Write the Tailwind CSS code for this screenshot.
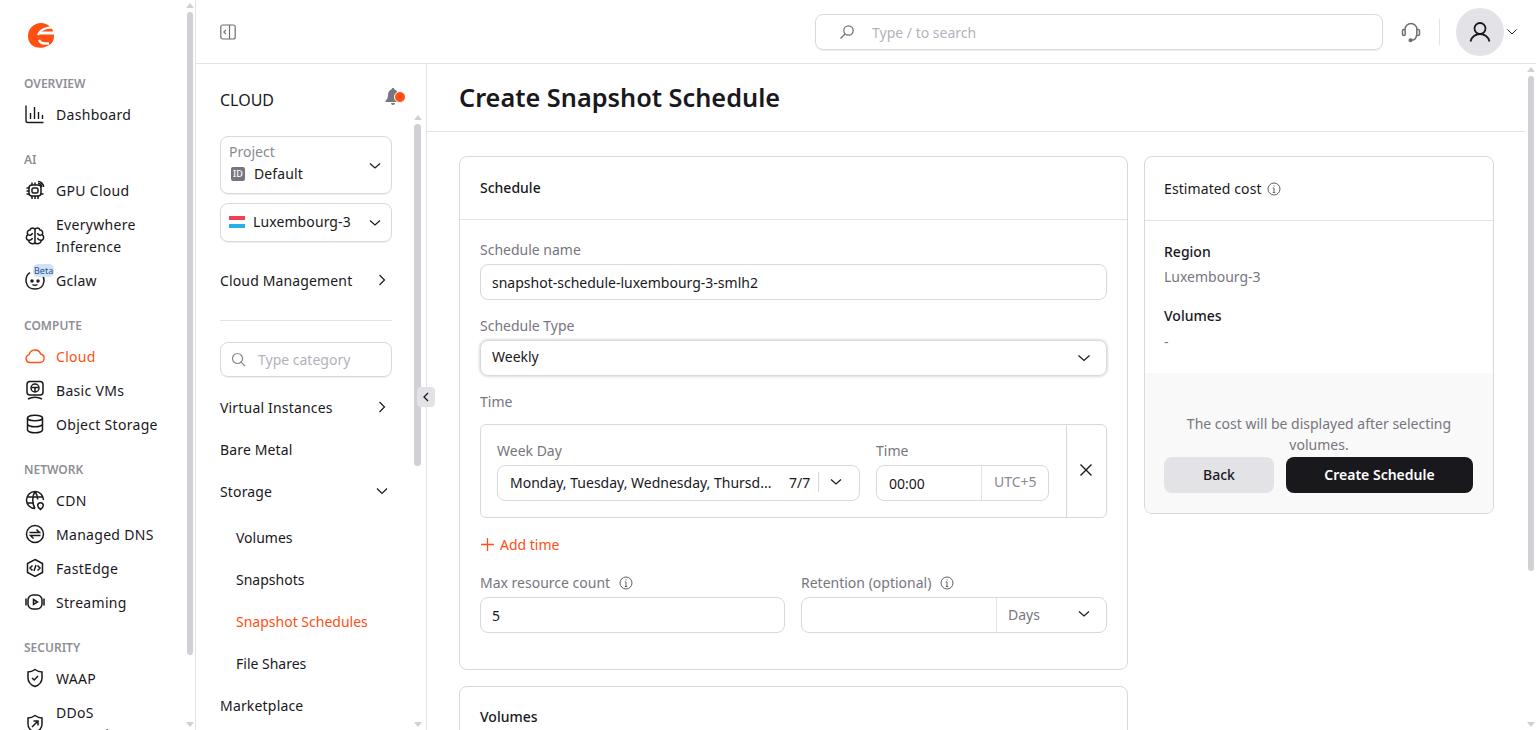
<!DOCTYPE html>
<html lang="en">
<head>
<meta charset="UTF-8">
<title>Create Snapshot Schedule</title>
<script src="https://cdn.jsdelivr.net/npm/@tailwindcss/browser@4"></script>
</head>
<body class="font-['Noto_Sans',sans-serif] text-[14px] text-[#19181c] bg-white">
<div class="flex h-[730px] w-[1536px] overflow-hidden">

  <!-- main nav -->
  <aside class="relative w-[196px] shrink-0 h-full overflow-hidden border-r border-[#e3e2e6] pl-[24px] tracking-[0.3px]">
    <div class="h-[74px] pt-[21px] pl-[3px]">
      <svg width="30" height="30" viewBox="0 0 30 30" fill="none"><circle cx="14" cy="15" r="13" fill="#ff4f12"/><path stroke="#fff" stroke-width="2.200" d="M31 7C23 5.500 14 7 11 14"/><path stroke="#fff" stroke-width="3" d="M12 12H29"/><path stroke="#fff" stroke-width="2.400" d="M12 19C13 21.500 15 22.500 18 22.500H22"/><path stroke="#fff" stroke-width="1.600" d="M4 24.500C10 29.500 20 28.500 27 21"/></svg>
    </div>
    <div class="h-[20px] text-[12px] leading-[20px] font-semibold tracking-normal text-[#8f8e96]">OVERVIEW</div>
    <ul class="mt-[4px]">
      <li class="h-[34px] pb-[2px] flex items-center gap-[10px]">
        <svg class="w-[22px] h-[22px] shrink-0" viewBox="0 0 22 22" fill="none" stroke="#19181c" stroke-width="1.400"><path d="M2 2.500V17.500a2 2 0 0 0 2 2H19.500M6.500 16V10M10.500 16V4M14.500 16V9M18.500 16V12"/></svg>
        <span>Dashboard</span>
      </li>
    </ul>
    <div class="mt-[18px] h-[20px] text-[12px] leading-[20px] font-semibold tracking-normal text-[#8f8e96]">AI</div>
    <ul class="mt-[4px]">
      <li class="h-[34px] pb-[2px] flex items-center gap-[10px]">
        <svg class="w-[22px] h-[22px] shrink-0" viewBox="0 0 22 22" fill="none" stroke="#19181c" stroke-width="1.500"><rect x="5" y="6" width="12" height="11" rx="3"/><rect x="8" y="9" width="6" height="5" rx="1.500"/><path d="M2.500 9H5M2.500 12H5M2.500 15H5M17 15H19.500M8 17V20M11 17V20M14 17V20M8 6V3.500M11 6V3.500M14 2.500c3 0 5.500 2.500 5.500 5.500M14 4.500c2 0 3.500 1.500 3.500 3.500"/></svg>
        <span>GPU Cloud</span>
      </li>
      <li class="h-[56px] flex items-center gap-[10px]">
        <svg class="w-[22px] h-[22px] shrink-0" viewBox="0 0 22 22" fill="none" stroke="#19181c" stroke-width="1.500"><path d="M11 4.500C10 2.500 6.500 2.500 6 5 3.500 5 2.500 8 4 9.500 1.500 11 2 15 4.500 15.500 5 18.500 9.500 20 11 17.500 12.500 20 17 18.500 17.500 15.500 20 15 20.500 11 18 9.500 19.500 8 18.500 5 16 5 15.500 2.500 12 2.500 11 4.500ZM11 4.500V17.500M4 9.500C6 11 8 10 8.500 8M18 9.500C16 11 14 10 13.500 8M4.500 15C6.500 15.500 8 14.500 8.500 13M17.500 15C15.500 15.500 14 14.500 13.500 13"/></svg>
        <span class="leading-[22px]">Everywhere Inference</span>
      </li>
      <li class="relative h-[34px] pb-[2px] flex items-center gap-[10px]">
        <svg class="w-[22px] h-[22px] shrink-0" viewBox="0 0 22 22" fill="none" stroke="#19181c" stroke-width="1.500"><path d="M6 3.500C3 5.500 2 8.500 2 11.500c0 1 0 1.500.5 2.500.5 3.500 4 6 8.500 6s8-2.500 8.500-6c.5-1 .5-1.500.5-2.500 0-2-.5-3.500-1.500-5"/><circle cx="8" cy="12" r="1" fill="#19181c"/><circle cx="14" cy="12" r="1" fill="#19181c"/><path d="M8.500 15.500c1.500 1 3.500 1 5 0"/></svg>
        <span>Gclaw</span>
        <span class="absolute left-[9px] top-[0px] h-[13px] rounded-[5px] bg-[#cfe2f8] px-[1px] text-[9px] leading-[13px] tracking-normal text-[#27518a]">Beta</span>
      </li>
    </ul>
    <div class="mt-[18px] h-[20px] text-[12px] leading-[20px] font-semibold tracking-normal text-[#8f8e96]">COMPUTE</div>
    <ul class="mt-[4px]">
      <li class="h-[34px] pb-[2px] flex items-center gap-[10px] text-[#ff4f12]">
        <svg class="w-[22px] h-[22px] shrink-0" viewBox="0 0 22 22" fill="none" stroke="#ff4f12" stroke-width="1.400"><path d="M6 17.500a4 4 0 0 1-.8-7.900 6 6 0 0 1 11.500-.6 4.300 4.300 0 0 1-.7 8.500Z"/></svg>
        <span>Cloud</span>
      </li>
      <li class="h-[34px] pb-[2px] flex items-center gap-[10px]">
        <svg class="w-[22px] h-[22px] shrink-0" viewBox="0 0 22 22" fill="none" stroke="#19181c" stroke-width="1.500"><rect x="3" y="2.500" width="16" height="13.500" rx="3"/><circle cx="11" cy="9" r="4"/><path d="M7.500 8.500H14.500M11 9V13M4 20c4-2.500 10-2.500 14 0"/></svg>
        <span>Basic VMs</span>
      </li>
      <li class="h-[34px] pb-[2px] flex items-center gap-[10px]">
        <svg class="w-[22px] h-[22px] shrink-0" viewBox="0 0 22 22" fill="none" stroke="#19181c" stroke-width="1.500"><ellipse cx="11" cy="5" rx="7.500" ry="2.800"/><path d="M3.500 5V17c0 1.500 3.400 2.800 7.500 2.800s7.500-1.300 7.500-2.800V5M3.500 11c0 1.500 3.400 2.800 7.500 2.800s7.500-1.300 7.500-2.800"/></svg>
        <span>Object Storage</span>
      </li>
    </ul>
    <div class="mt-[18px] h-[20px] text-[12px] leading-[20px] font-semibold tracking-normal text-[#8f8e96]">NETWORK</div>
    <ul class="mt-[4px]">
      <li class="h-[34px] pb-[2px] flex items-center gap-[10px]">
        <svg class="w-[22px] h-[22px] shrink-0" viewBox="0 0 22 22" fill="none" stroke="#19181c" stroke-width="1.500"><path d="M11 19.500a8.500 8.500 0 1 1 8.500-8.500M3 8H19M3 14H10M11 2.500C8 7 8 15 11 19.500M11 2.500c2 3 2.700 6 2.700 8"/><path d="M16.500 20.500c-1.500-1.300-2.800-2.500-2.800-4a2.800 2.800 0 0 1 5.600 0c0 1.500-1.300 2.700-2.800 4Z"/></svg>
        <span>CDN</span>
      </li>
      <li class="h-[34px] pb-[2px] flex items-center gap-[10px]">
        <svg class="w-[22px] h-[22px] shrink-0" viewBox="0 0 22 22" fill="none" stroke="#19181c" stroke-width="1.500"><circle cx="11" cy="11" r="8.500"/><path d="M5.500 9.500H15.500L12.500 6.500M16.500 12.500H6.500L9.500 15.500"/></svg>
        <span>Managed DNS</span>
      </li>
      <li class="h-[34px] pb-[2px] flex items-center gap-[10px]">
        <svg class="w-[22px] h-[22px] shrink-0" viewBox="0 0 22 22" fill="none" stroke="#19181c" stroke-width="1.500"><path d="M11 2.500 18.500 6.500V15.500L11 19.500 3.500 15.500V6.500ZM8.500 8.500 6 11 8.500 13.500M13.500 8.500 16 11 13.500 13.500M12 8 10 14"/></svg>
        <span>FastEdge</span>
      </li>
      <li class="h-[34px] pb-[2px] flex items-center gap-[10px]">
        <svg class="w-[22px] h-[22px] shrink-0" viewBox="0 0 22 22" fill="none" stroke="#19181c" stroke-width="1.500"><rect x="4" y="4" width="14" height="14" rx="5"/><path d="M2 7.500v7M20 7.500v7M9.500 8.500 13.500 11 9.500 13.500Z"/></svg>
        <span>Streaming</span>
      </li>
    </ul>
    <div class="mt-[18px] h-[20px] text-[12px] leading-[20px] font-semibold tracking-normal text-[#8f8e96]">SECURITY</div>
    <ul class="mt-[4px]">
      <li class="h-[34px] pb-[2px] flex items-center gap-[10px]">
        <svg class="w-[22px] h-[22px] shrink-0" viewBox="0 0 22 22" fill="none" stroke="#19181c" stroke-width="1.500"><path d="M11 2.500c2 1.500 4.500 2.500 7 2.500v6c0 4-3 7-7 8.500C7 18 4 15 4 11V5c2.500 0 5-1 7-2.500ZM8 11 10.200 13 14 9"/></svg>
        <span>WAAP</span>
      </li>
      <li class="h-[56px] flex items-center gap-[10px]">
        <svg class="w-[22px] h-[22px] shrink-0" viewBox="0 0 22 22" fill="none" stroke="#19181c" stroke-width="1.500"><path d="M11 2.500c2 1.500 4.500 2.500 7 2.500v6c0 4-3 7-7 8.500C7 18 4 15 4 11V5c2.500 0 5-1 7-2.500ZM8 14 14 8M9.500 8H14V12.500"/></svg>
        <span class="leading-[22px]">DDoS<br>Protection</span>
      </li>
    </ul>
    <!-- scrollbar -->
    <div class="absolute right-[2px] top-[12px] h-[643px] w-[6px] rounded-full bg-[#d1d0d6]"></div>
    <div class="absolute right-[1px] top-[3px] border-x-[4px] border-b-[5px] border-x-transparent border-b-[#d1d0d6]"></div>
    <div class="absolute right-[1px] top-[722px] border-x-[4px] border-t-[5px] border-x-transparent border-t-[#d1d0d6]"></div>
  </aside>

  <div class="flex-1 min-w-0 flex flex-col">
    <!-- top bar -->
    <header class="h-[64px] shrink-0 flex items-center border-b border-[#e3e2e6] pl-[24px] pr-[12px]">
      <svg class="w-[16px] h-[16px]" viewBox="0 0 16 16" fill="none" stroke="#6f6e76" stroke-width="1.200"><rect x=".8" y="1" width="14.400" height="14" rx="2"/><path d="M9.500 1V15M6 5.800 3.800 8 6 10.200"/></svg>
      <div class="ml-[579px] w-[568px] h-[36px] flex items-center rounded-[8px] border border-[#d9d8dd] pl-[23px] shadow-[0_1px_1px_#f0f0f2]">
        <svg class="w-[16px] h-[16px]" viewBox="0 0 16 16" fill="none" stroke="#6f6e76" stroke-width="1.200"><circle cx="9.500" cy="6.500" r="4.700"/><path d="M6 10 1.500 14.500"/></svg>
        <span class="ml-[17px] pt-[1px] text-[#b3b2ba]">Type / to search</span>
      </div>
      <svg class="ml-[17px] w-[22px] h-[22px]" viewBox="0 0 22 22" fill="none" stroke="#6f6e76" stroke-width="1.500"><path d="M5 9V8.500a6 6 0 0 1 12 0V9M16.500 14c0 3-2 5-5 5.300"/><rect x="2.500" y="8.500" width="2.700" height="6" rx="1.200"/><rect x="16.800" y="8.500" width="2.700" height="6" rx="1.200"/><circle cx="10.500" cy="19.300" r="1.300" fill="#6f6e76"/></svg>
      <div class="ml-[17px] w-px h-[26px] bg-[#e3e2e6]"></div>
      <div class="ml-[16px] w-[48px] h-[48px] rounded-full bg-[#e3e2e6] flex items-center justify-center">
        <svg class="w-[24px] h-[24px]" viewBox="0 0 24 24" fill="none" stroke="#19181c" stroke-width="1.800"><circle cx="12" cy="8.500" r="5.500"/><path d="M2.500 21.500c1-4.500 5-7.500 9.500-7.500s8.500 3 9.500 7.500"/></svg>
      </div>
      <svg class="ml-[3px] w-[10px] h-[10px]" viewBox="0 0 10 10" fill="none" stroke="#19181c" stroke-width="1"><path d="M.5 2.500 5 7 9.500 2.500"/></svg>
    </header>

    <div class="flex-1 min-h-0 flex">
      <!-- cloud sidebar -->
      <aside class="relative w-[231px] shrink-0 overflow-hidden border-r border-[#e3e2e6] pl-[24px]">
        <div class="h-[72px] flex items-center text-[16px]">CLOUD</div>
        <div class="w-[172px] h-[58px] rounded-[8px] border border-[#d9d8dd] pl-[8px] pr-[10px] flex items-center justify-between shadow-[0_1px_1px_#f0f0f2]">
          <div class="mb-[5px]">
            <div class="leading-[22px] text-[#8a8992]">Project</div>
            <div class="flex items-center gap-[9px] leading-[22px]">
              <span class="w-[14px] h-[14px] ml-[2px] rounded-[2px] bg-[#77767e] text-white text-[9px] leading-[14px] text-center font-medium">ID</span>
              <span class="tracking-[0.1px]">Default</span>
            </div>
          </div>
          <svg class="mt-[2px] w-[12px] h-[12px]" viewBox="0 0 12 12" fill="none" stroke="#19181c" stroke-width="1.200"><path d="M1 3.500 6 8 11 3.500"/></svg>
        </div>
        <div class="mt-[9px] w-[172px] h-[39px] rounded-[8px] border border-[#d9d8dd] pl-[8px] pr-[10px] flex items-center justify-between shadow-[0_1px_1px_#f0f0f2]">
          <div class="flex items-center gap-[8px] pb-[2px]">
            <span class="w-[16px] h-[12px] flex flex-col">
              <span class="h-1/3 bg-[#ef4056]"></span><span class="h-1/3 bg-white"></span><span class="h-1/3 bg-[#28b1e7]"></span>
            </span>
            <span class="tracking-[0.1px]">Luxembourg-3</span>
          </div>
          <svg class="w-[12px] h-[12px]" viewBox="0 0 12 12" fill="none" stroke="#19181c" stroke-width="1.200"><path d="M1 3.500 6 8 11 3.500"/></svg>
        </div>
        <div class="mt-[22px] w-[172px] h-[34px] pb-[2px] flex items-center justify-between pr-[4px] tracking-[0.14px]">
          <span>Cloud Management</span>
          <svg class="w-[12px] h-[12px]" viewBox="0 0 12 12" fill="none" stroke="#19181c" stroke-width="1.200"><path d="M3.500 1 8.500 6 3.500 11"/></svg>
        </div>
        <div class="mt-[22px] w-[172px] h-px bg-[#e3e2e6]"></div>
        <div class="mt-[21px] w-[172px] h-[35px] rounded-[8px] border border-[#d9d8dd] pl-[10px] flex items-center gap-[12px] shadow-[0_1px_1px_#f0f0f2]">
          <svg class="w-[15px] h-[15px]" viewBox="0 0 15 15" fill="none" stroke="#8a8992" stroke-width="1.200"><circle cx="6.500" cy="6.500" r="5"/><path d="M10.200 10.200 14 14"/></svg>
          <span class="text-[#b3b2ba]">Type category</span>
        </div>
        <ul class="mt-[9px] w-[172px]">
          <li class="h-[42px] flex items-center justify-between pr-[4px] tracking-[0.18px]"><span>Virtual Instances</span><svg class="w-[12px] h-[12px]" viewBox="0 0 12 12" fill="none" stroke="#19181c" stroke-width="1.200"><path d="M3.500 1 8.500 6 3.500 11"/></svg></li>
          <li class="h-[42px] flex items-center tracking-[0.14px]">Bare Metal</li>
          <li class="h-[42px] flex items-center justify-between pr-[4px] tracking-[0.14px]"><span>Storage</span><svg class="w-[12px] h-[12px]" viewBox="0 0 12 12" fill="none" stroke="#19181c" stroke-width="1.200"><path d="M1 3.500 6 8.500 11 3.500"/></svg></li>
          <li class="mt-[4px] h-[42px] flex items-center pl-[16px]">Volumes</li>
          <li class="h-[42px] flex items-center pl-[16px]">Snapshots</li>
          <li class="h-[42px] flex items-center pl-[16px] text-[#ff4f12]">Snapshot Schedules</li>
          <li class="h-[42px] flex items-center pl-[16px]">File Shares</li>
          <li class="h-[42px] flex items-center tracking-[0.18px]">Marketplace</li>
        </ul>
        <!-- bell + scrollbar overlays -->
        <svg class="absolute left-[189px] top-[23px] w-[22px] h-[20px]" viewBox="0 0 22 20"><path fill="#77767e" d="M8 1c.8 0 1.500.6 1.500 1.400 2.500.8 3.500 3 3.500 5.600 0 3 1 4.500 2.500 6v1H.5v-1c1.500-1.500 2.500-3 2.500-6 0-2.600 1-4.800 3.500-5.600C6.500 1.600 7.200 1 8 1ZM6 16h4a2 2 0 0 1-4 0Z"/><circle cx="15" cy="10" r="5.500" fill="#ff4f12" stroke="#fff" stroke-width="1"/></svg>
        <div class="absolute left-[218px] top-[60px] h-[342px] w-[7px] rounded-full bg-[#d1d0d6]"></div>
        <div class="absolute left-[218px] top-[51px] border-x-[4px] border-b-[5px] border-x-transparent border-b-[#d1d0d6]"></div>
        <div class="absolute left-[218px] top-[658px] border-x-[4px] border-t-[5px] border-x-transparent border-t-[#d1d0d6]"></div>
      </aside>

      <!-- page -->
      <main class="relative flex-1 min-w-0 overflow-hidden">
        <div class="mr-[11px] h-[68px] flex items-center border-b border-[#e3e2e6] pl-[32px] pt-[1px]">
          <h1 class="text-[25.3px] font-semibold">Create Snapshot Schedule</h1>
        </div>
        <div class="flex items-start gap-[16px] pl-[32px] pt-[24px]">
          <div class="w-[669px] flex flex-col gap-[16px]">
            <section class="h-[514px] rounded-[8px] border border-[#d9d8dd]">
              <div class="h-[63px] pb-[2px] flex items-center px-[20px] border-b border-[#e3e2e6] font-medium">Schedule</div>
              <div class="px-[20px] pt-[19px]">
                <div class="leading-[22px] text-[#77767e]">Schedule name</div>
                <div class="mt-[3px] h-[36px] rounded-[8px] border border-[#d9d8dd] pl-[11px] flex items-center">snapshot-schedule-luxembourg-3-smlh2</div>
                <div class="mt-[15px] leading-[22px] text-[#77767e]">Schedule Type</div>
                <div class="mt-[3px] h-[36px] rounded-[8px] border border-[#d9d8dd] pl-[11px] pr-[15px] flex items-center justify-between shadow-[0_0_3px_#b8b7be]">
                  <span class="mb-[4px]">Weekly</span>
                  <svg class="w-[14px] h-[14px]" viewBox="0 0 14 14" fill="none" stroke="#19181c" stroke-width="1.200"><path d="M1.500 4.500 7 9.500 12.500 4.500"/></svg>
                </div>
                <div class="mt-[15px] leading-[22px] text-[#77767e]">Time</div>
                <div class="mt-[11px] h-[94px] rounded-[6px] border border-[#d9d8dd] flex">
                  <div class="flex-1 flex gap-[16px] pl-[16px] pt-[15px]">
                    <div>
                      <div class="leading-[22px] text-[#77767e]">Week Day</div>
                      <div class="mt-[3px] w-[363px] h-[36px] rounded-[8px] border border-[#d9d8dd] pl-[12px] pb-[2px] flex items-center">
                        <span class="w-[267px] whitespace-nowrap overflow-hidden">Monday, Tuesday, Wednesday, Thursd...</span>
                        <span class="ml-[12px]">7/7</span>
                        <span class="ml-[8px] w-px h-[20px] bg-[#d9d8dd]"></span>
                        <svg class="ml-[11px] w-[12px] h-[12px]" viewBox="0 0 12 12" fill="none" stroke="#19181c" stroke-width="1.200"><path d="M1 3.500 6 8 11 3.500"/></svg>
                      </div>
                    </div>
                    <div>
                      <div class="leading-[22px] text-[#77767e]">Time</div>
                      <div class="mt-[3px] w-[173px] h-[36px] rounded-[8px] border border-[#d9d8dd] flex items-center">
                        <span class="w-[104px] pl-[12px]">00:00</span>
                        <span class="h-full flex-1 border-l border-[#e3e2e6] pl-[12px] leading-[31px] text-[#8a8992]">UTC+5</span>
                      </div>
                    </div>
                  </div>
                  <div class="w-[40px] border-l border-[#d9d8dd] flex items-center justify-center">
                    <svg class="w-[14px] h-[14px] mb-[2px] mr-[1px]" viewBox="0 0 14 14" fill="none" stroke="#19181c" stroke-width="1.400"><path d="M1.500 1.500 12.500 12.500M12.500 1.500 1.500 12.500"/></svg>
                  </div>
                </div>
                <div class="mt-[15px] h-[22px] flex items-center gap-[5px] text-[#ff4f12]">
                  <svg class="w-[15px] h-[15px]" viewBox="0 0 15 15" fill="none" stroke="#ff4f12" stroke-width="1.300"><path d="M7.500 1V14M1 7.500H14"/></svg>
                  <span>Add time</span>
                </div>
                <div class="mt-[17px] flex gap-[16px]">
                  <div class="w-[305px]">
                    <div class="flex items-center gap-[9px] leading-[22px] text-[#77767e]">
                      <span>Max resource count</span>
                      <svg class="w-[14px] h-[14px]" viewBox="0 0 14 14" fill="none" stroke="#5f5e66" stroke-width="1"><circle cx="7" cy="7" r="6"/><path d="M7 6V10.500M5.800 6H7M5.800 10.500H8.200M7 3.500V4.500"/></svg>
                    </div>
                    <div class="mt-[3px] h-[36px] rounded-[8px] border border-[#d9d8dd] pl-[11px] flex items-center">5</div>
                  </div>
                  <div class="w-[306px]">
                    <div class="flex items-center gap-[9px] leading-[22px] text-[#77767e]">
                      <span>Retention (optional)</span>
                      <svg class="w-[14px] h-[14px]" viewBox="0 0 14 14" fill="none" stroke="#5f5e66" stroke-width="1"><circle cx="7" cy="7" r="6"/><path d="M7 6V10.500M5.800 6H7M5.800 10.500H8.200M7 3.500V4.500"/></svg>
                    </div>
                    <div class="mt-[3px] h-[36px] rounded-[8px] border border-[#d9d8dd] flex items-center">
                      <span class="w-[194px] h-full"></span>
                      <span class="flex-1 h-full border-l border-[#e3e2e6] pl-[11px] pr-[16px] pb-[2px] flex items-center justify-between text-[#77767e]">
                        Days
                        <svg class="w-[12px] h-[12px]" viewBox="0 0 12 12" fill="none" stroke="#19181c" stroke-width="1.200"><path d="M1 3.500 6 8 11 3.500"/></svg>
                      </span>
                    </div>
                  </div>
                </div>
              </div>
            </section>
            <section class="h-[200px] rounded-[8px] border border-[#d9d8dd]">
              <div class="h-[63px] pb-[4px] flex items-center px-[20px] font-medium">Volumes</div>
            </section>
          </div>
          <!-- cost panel -->
          <section class="w-[350px] h-[358px] rounded-[8px] border border-[#d9d8dd] overflow-hidden flex flex-col">
            <div class="h-[64px] flex items-center gap-[5px] pl-[19px] border-b border-[#e3e2e6] shrink-0">
              <span class="tracking-[0.1px]">Estimated cost</span>
              <svg class="w-[14px] h-[14px]" viewBox="0 0 14 14" fill="none" stroke="#5f5e66" stroke-width="1"><circle cx="7" cy="7" r="6"/><path d="M7 6V10.500M5.800 6H7M5.800 10.500H8.200M7 3.500V4.500"/></svg>
            </div>
            <div class="h-[152px] shrink-0 pl-[19px] pt-[20px]">
              <div class="leading-[22px] font-medium">Region</div>
              <div class="mt-[3px] leading-[22px] text-[#77767e]">Luxembourg-3</div>
              <div class="mt-[17px] leading-[22px] font-medium">Volumes</div>
              <div class="mt-[4px] leading-[22px] text-[#77767e]">-</div>
            </div>
            <div class="flex-1 bg-[#f9f9f9] px-[19px] pt-[40px]">
              <p class="text-center leading-[21px] text-[#77767e]">The cost will be displayed after selecting volumes.</p>
              <div class="mt-[2px] flex gap-[12px]">
                <button class="w-[110px] h-[36px] pb-[2px] rounded-[8px] bg-[#e3e2e6] font-medium">Back</button>
                <button class="w-[187px] h-[36px] pb-[2px] rounded-[8px] bg-[#19181c] text-white font-semibold">Create Schedule</button>
              </div>
            </div>
          </section>
        </div>
        <div class="absolute right-[2px] top-[12px] h-[495px] w-[6px] rounded-full bg-[#d1d0d6]"></div>
        <div class="absolute right-[1px] top-[3px] border-x-[4px] border-b-[5px] border-x-transparent border-b-[#d1d0d6]"></div>
        <div class="absolute right-[1px] top-[658px] border-x-[4px] border-t-[5px] border-x-transparent border-t-[#d1d0d6]"></div>
      </main>
    </div>
  </div>
</div>
<!-- collapse handle -->
<button class="absolute left-[417px] top-[387px] w-[18px] h-[20px] rounded-[4px] bg-[#e3e2e6] flex items-center justify-center">
  <svg class="w-[10px] h-[10px]" viewBox="0 0 10 10" fill="none" stroke="#19181c" stroke-width="1.300"><path d="M7 1 3 5 7 9"/></svg>
</button>
</body>
</html>
